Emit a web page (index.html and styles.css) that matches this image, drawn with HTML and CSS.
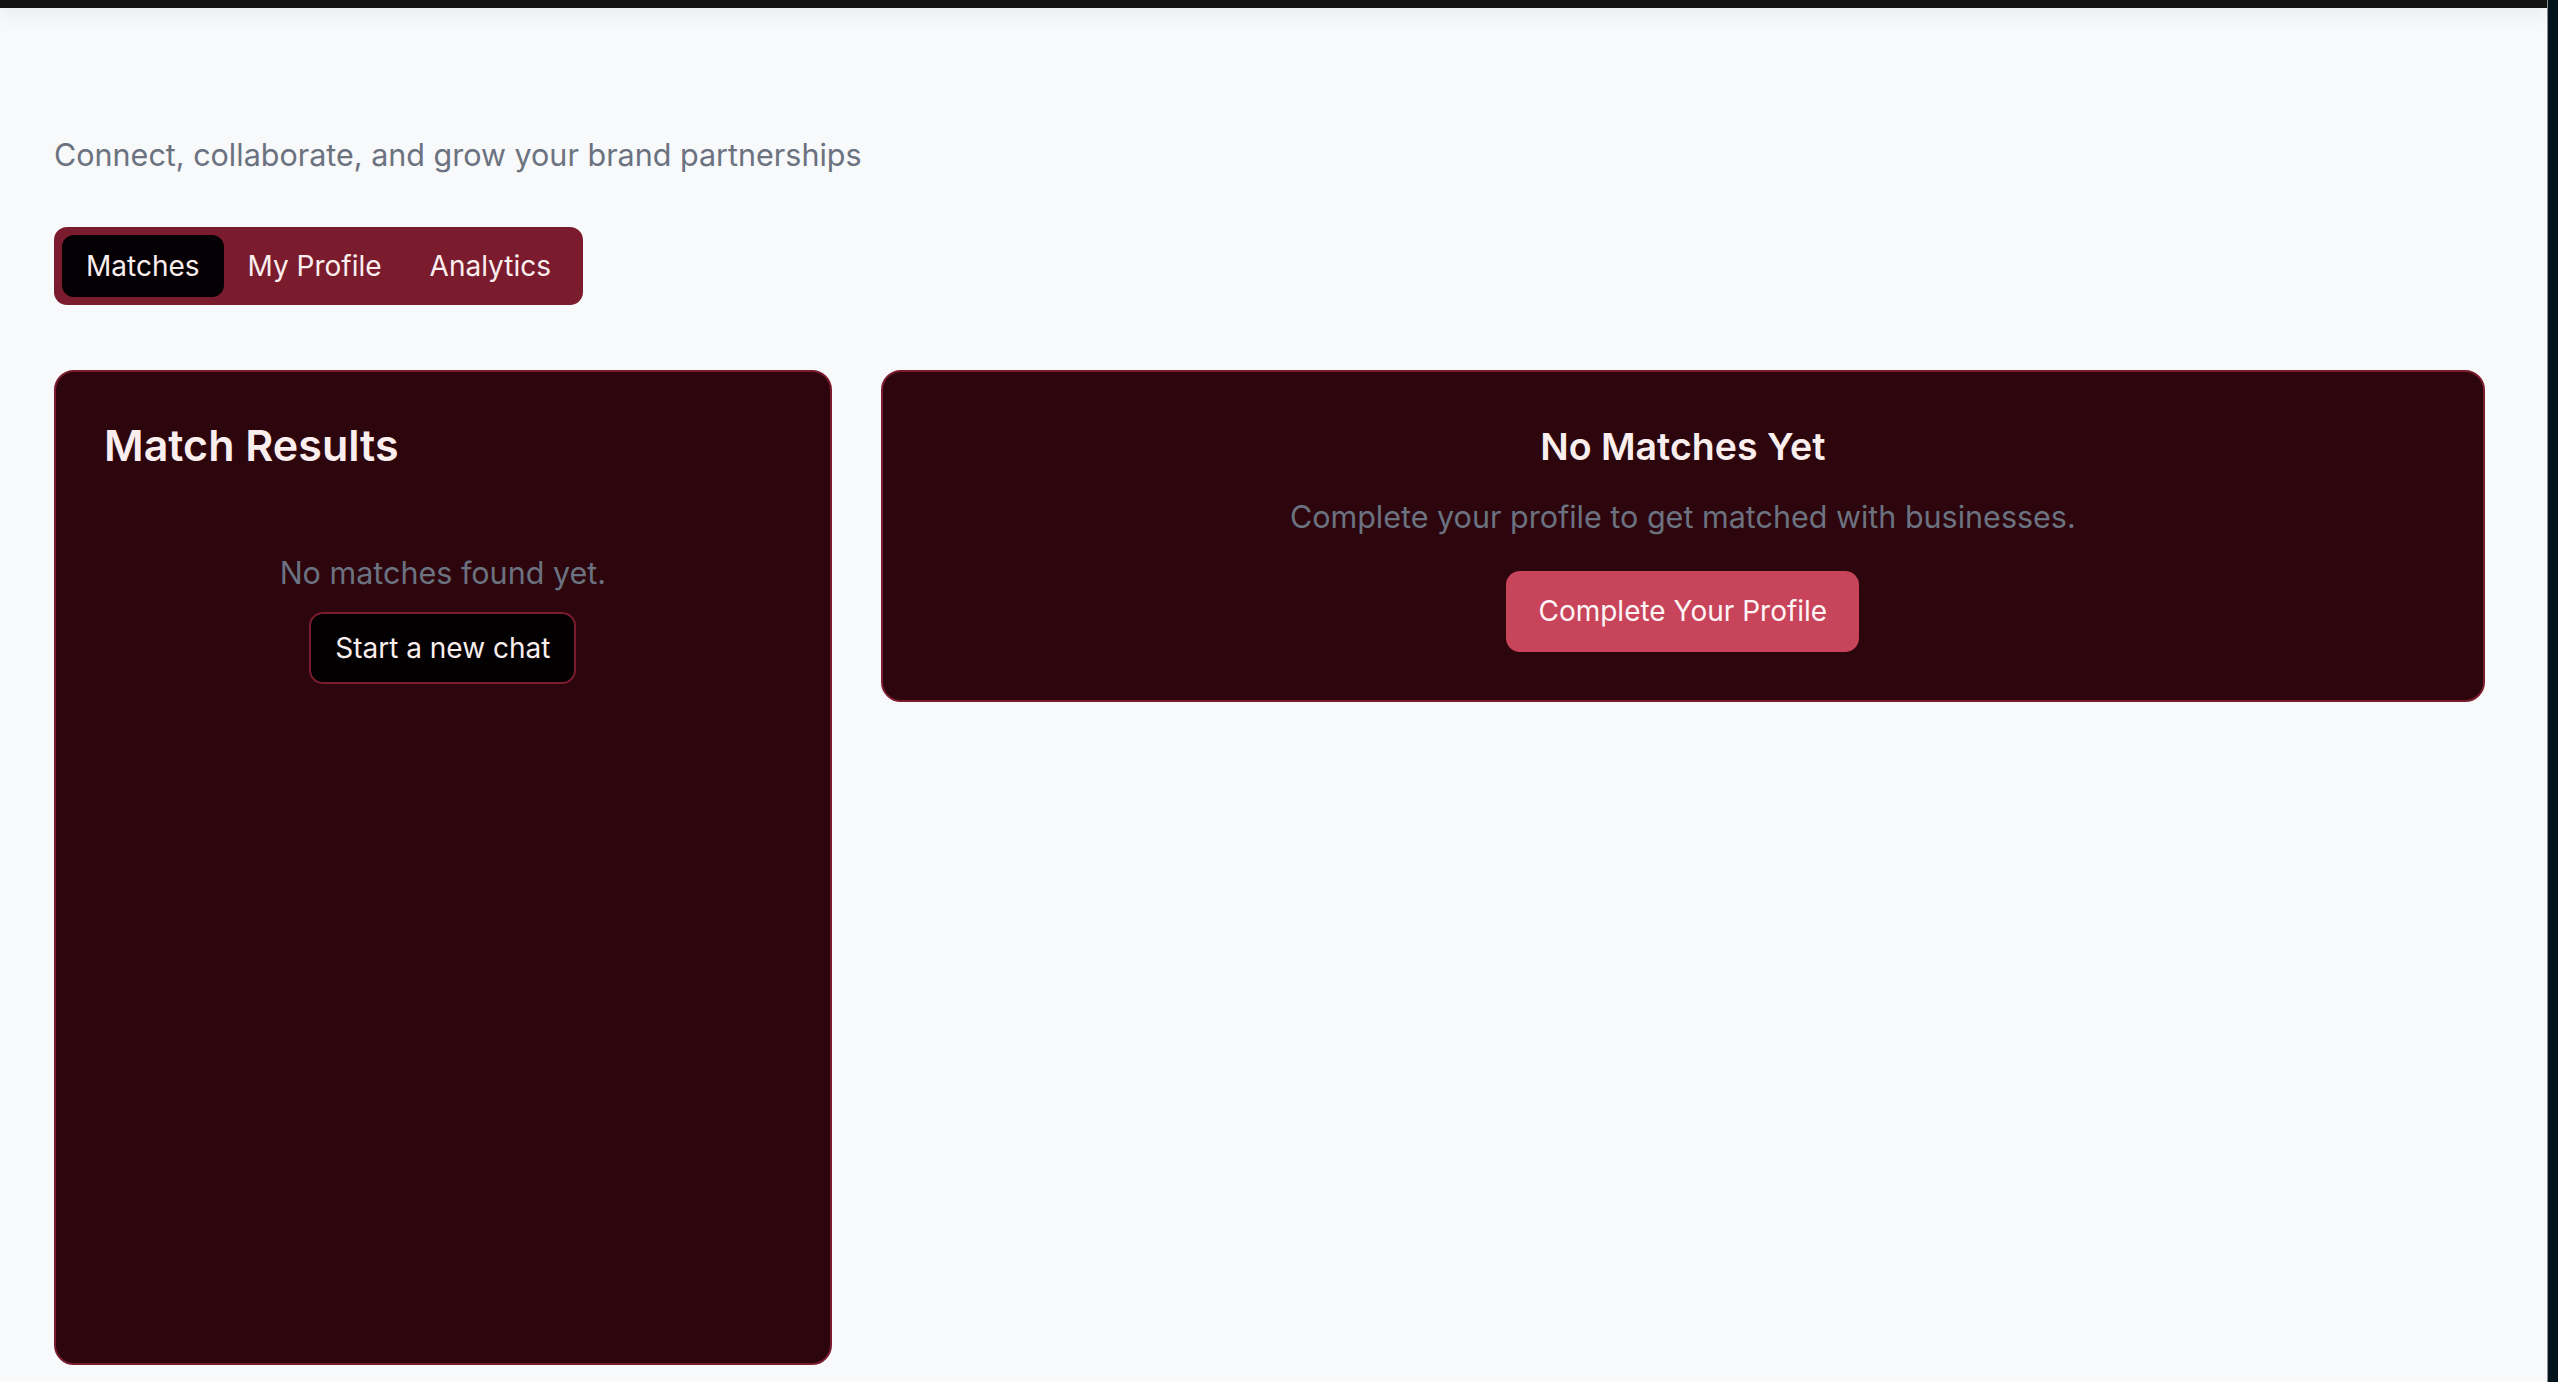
FILE: index.html
```html
<!DOCTYPE html>
<html lang="en">
<head>
<meta charset="utf-8">
<title>Matches</title>
<link rel="stylesheet" href="styles.css">
</head>
<body>
<div class="frame">
  <div class="viewport">
    <div class="topbar"></div>
    <main class="page">
      <p class="subtitle">Connect, collaborate, and grow your brand partnerships</p>
      <nav class="tabs">
        <button class="tab active">Matches</button>
        <button class="tab">My Profile</button>
        <button class="tab">Analytics</button>
      </nav>
      <div class="grid">
        <section class="card results">
          <h2 class="results-title">Match Results</h2>
          <div class="results-empty">
            <p class="muted">No matches found yet.</p>
            <button class="chat-btn">Start a new chat</button>
          </div>
        </section>
        <section class="card empty">
          <h3 class="empty-title">No Matches Yet</h3>
          <p class="muted">Complete your profile to get matched with businesses.</p>
          <button class="primary-btn">Complete Your Profile</button>
        </section>
      </div>
    </main>
  </div>
  <div class="edge"></div>
</div>
</body>
</html>
```
FILE: styles.css
```css
* { box-sizing: border-box; }
html, body { margin: 0; padding: 0; height: 100%; }
body {
  font-family: Inter, "Noto Sans", "Liberation Sans", sans-serif;
  background: #f8f9fb;
  overflow: hidden;
}
.frame {
  display: flex;
  height: 1382px;
}
.viewport {
  flex: 1;
  display: flex;
  flex-direction: column;
  background: #f8f9fb;
}
.topbar {
  height: 8px;
  background: #121212;
  box-shadow: 0 4px 18px rgba(0,0,0,0.12);
  position: relative;
  z-index: 1;
}
.edge {
  width: 11px;
  background: #03141c;
  border-left: 1px solid #8a8f94;
}
.page {
  padding: 125px 62px 0 54px;
}
.subtitle {
  margin: 0;
  font-size: 30.5px;
  line-height: 44px;
  color: #6b7280;
}
.tabs {
  margin-top: 50px;
  display: inline-flex;
  padding: 8px;
  background: #7a1c2e;
  border-radius: 13px;
}
.tab {
  font-family: inherit;
  font-size: 28px;
  line-height: 62px;
  height: 62px;
  padding: 0 24px;
  border: 0;
  background: transparent;
  color: #fbeeee;
  border-radius: 12px;
}
.tab.active {
  background: #050003;
}
.grid {
  margin-top: 65px;
  display: grid;
  grid-template-columns: repeat(3, 1fr);
  gap: 49px;
  align-items: start;
}
.card {
  background: #2d050d;
  border: 2px solid #7a1c2e;
  border-radius: 20px;
  padding: 48px;
}
.results {
  height: 995px;
}
.empty {
  grid-column: span 2;
  display: flex;
  flex-direction: column;
  align-items: center;
}
.results-title {
  margin: 0;
  font-size: 43px;
  line-height: 50px;
  font-weight: 600;
  color: #fbeeee;
}
.results-empty {
  margin-top: 82px;
  display: flex;
  flex-direction: column;
  align-items: center;
}
.muted {
  margin: 0;
  font-size: 30.5px;
  line-height: 42px;
  color: #6b7280;
}
.chat-btn {
  margin-top: 18px;
  font-family: inherit;
  font-size: 28px;
  line-height: 40px;
  padding: 14px 24px;
  background: #030001;
  color: #fbeeee;
  border: 2px solid #7a1c2e;
  border-radius: 14px;
}
.empty-title {
  margin: 0;
  font-size: 37.5px;
  line-height: 54px;
  font-weight: 600;
  color: #fbeeee;
}
.empty .muted {
  margin-top: 22px;
}
.primary-btn {
  margin-top: 33px;
  font-family: inherit;
  font-size: 28px;
  line-height: 41px;
  padding: 20px 32px;
  background: #c7445a;
  color: #fff5f6;
  border: 0;
  border-radius: 14px;
}
```
